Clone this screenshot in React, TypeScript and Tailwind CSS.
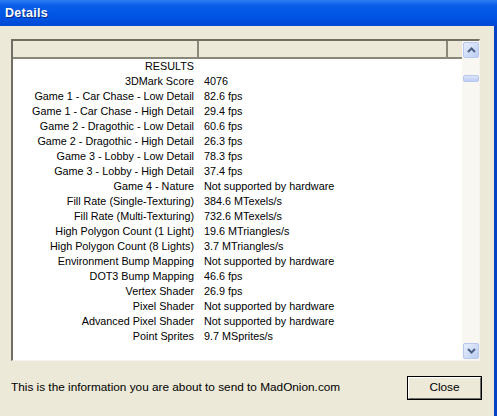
import React from "react";

const rows: [string, string][] = [
  ["RESULTS", ""],
  ["3DMark Score", "4076"],
  ["Game 1 - Car Chase - Low Detail", "82.6 fps"],
  ["Game 1 - Car Chase - High Detail", "29.4 fps"],
  ["Game 2 - Dragothic - Low Detail", "60.6 fps"],
  ["Game 2 - Dragothic - High Detail", "26.3 fps"],
  ["Game 3 - Lobby - Low Detail", "78.3 fps"],
  ["Game 3 - Lobby - High Detail", "37.4 fps"],
  ["Game 4 - Nature", "Not supported by hardware"],
  ["Fill Rate (Single-Texturing)", "384.6 MTexels/s"],
  ["Fill Rate (Multi-Texturing)", "732.6 MTexels/s"],
  ["High Polygon Count (1 Light)", "19.6 MTriangles/s"],
  ["High Polygon Count (8 Lights)", "3.7 MTriangles/s"],
  ["Environment Bump Mapping", "Not supported by hardware"],
  ["DOT3 Bump Mapping", "46.6 fps"],
  ["Vertex Shader", "26.9 fps"],
  ["Pixel Shader", "Not supported by hardware"],
  ["Advanced Pixel Shader", "Not supported by hardware"],
  ["Point Sprites", "9.7 MSprites/s"],
];

function Arrow({ up }: { up: boolean }) {
  return (
    <svg width="9" height="6" viewBox="0 0 9 6">
      <path
        d={up ? "M1 5 L4.5 1.5 L8 5" : "M1 1 L4.5 4.5 L8 1"}
        fill="none"
        stroke="#4D6185"
        strokeWidth="2"
      />
    </svg>
  );
}

function ScrollBtn({ up }: { up: boolean }) {
  return (
    <div className="w-[16px] h-[16px] rounded-[2px] border border-[#B8C8EE] bg-[linear-gradient(135deg,#E6EEFC,#BCCDF3)] flex items-center justify-center">
      <Arrow up={up} />
    </div>
  );
}

export default function App() {
  return (
    <div
      className="w-[497px] h-[416px] flex flex-col overflow-hidden text-black"
      style={{ fontFamily: '"Liberation Sans", Arial, sans-serif' }}
    >
      <div className="h-[26px] shrink-0 bg-[linear-gradient(180deg,#2E7DF5_0%,#0A5DE8_20%,#0055E5_60%,#0048D4_100%)] flex items-center pl-[5px]">
        <span className="text-white font-bold text-[12.5px] tracking-[0.3px] [text-shadow:1px_1px_0_#0A2C8A]">
          Details
        </span>
      </div>
      <div className="flex-1 flex bg-[#ECE9D8]">
        <div className="flex-1 flex flex-col pl-[11px] pr-[14px] pt-[13px]">
          <div className="h-[322px] flex border-t-2 border-l-2 border-t-[#716F64] border-l-[#716F64] border-b border-r border-b-[#F4F3EE] border-r-[#F4F3EE] bg-white">
            <div className="flex-1 flex flex-col min-w-0">
              <div className="h-[18px] flex bg-[#ECE9D8] border-b-2 border-b-[#8A8878]">
                <div className="w-[186px] border-r-2 border-r-[#8A8878]" />
                <div className="w-[249px] border-r-2 border-r-[#8A8878]" />
                <div className="flex-1" />
              </div>
              <div className="flex flex-col text-[10.8px] leading-[15px]">
                {rows.map(([l, v]) => (
                  <div key={l} className="flex h-[15px] whitespace-nowrap">
                    <div className="w-[186px] text-right pr-[5px]">{l}</div>
                    <div className="pl-[5px]">{v}</div>
                  </div>
                ))}
              </div>
            </div>
            <div className="w-[17px] flex flex-col justify-between bg-[#F8F7F1] py-[1px] pl-[1px]">
              <div className="flex flex-col gap-[17px]">
                <ScrollBtn up />
                <div className="w-[16px] h-[7px] rounded-[2px] border border-[#B8C8EE] bg-[linear-gradient(180deg,#DCE6FB,#BCCDF3)]" />
              </div>
              <ScrollBtn up={false} />
            </div>
          </div>
          <div className="flex-1 flex items-center justify-between pb-[2px]">
            <span className="text-[11.8px]">
              This is the information you are about to send to MadOnion.com
            </span>
            <div className="w-[75px] h-[24px] border border-black bg-[#ECE9D8] flex mr-[-2px]">
              <div className="flex-1 flex items-center justify-center border-t border-l border-t-white border-l-white border-b border-r border-b-[#716F64] border-r-[#716F64] text-[11.8px]">
                Close
              </div>
            </div>
          </div>
        </div>
        <div className="w-[3px] bg-[#0842C4]" />
      </div>
    </div>
  );
}
